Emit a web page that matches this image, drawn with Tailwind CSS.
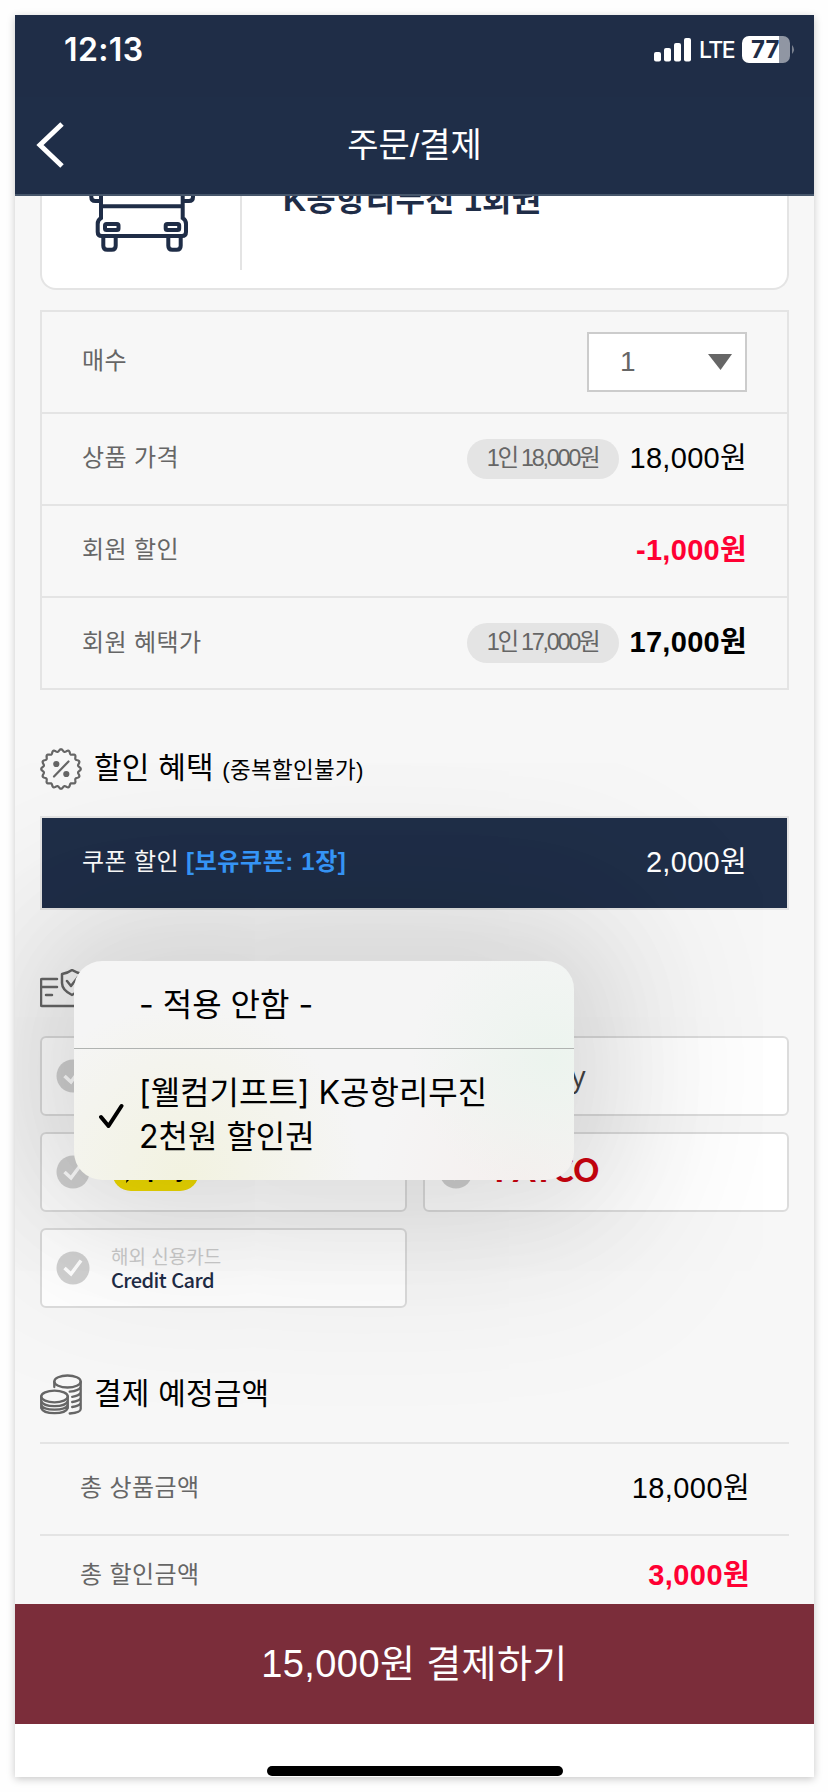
<!DOCTYPE html>
<html lang="ko">
<head>
<meta charset="utf-8">
<title>주문/결제</title>
<script src="https://cdn.jsdelivr.net/npm/@tailwindcss/browser@4"></script>
</head>
<body class="h-[1792px] w-[828px] overflow-hidden bg-[#fefefe] p-[15px] font-['Liberation_Sans','Noto_Sans_CJK_KR',sans-serif] text-black">
<main class="flex h-[1762px] w-[799px] flex-col overflow-hidden bg-white shadow-[0_2px_8px_rgba(0,0,0,0.22)]">
  <header class="relative z-20 flex h-[181px] shrink-0 flex-col border-b-2 border-[#46566b] bg-[#1f2d47] text-white">
    <div class="flex h-[82px] items-start justify-between pt-[15px] pr-[18px] pl-[49px]">
      <div class="font-['Inter',sans-serif] text-[32px] leading-[40px] font-semibold tracking-[0.4px]">12:13</div>
      <div class="flex h-[39px] items-center">
        <svg class="mr-[8px] h-[24px] w-[37px]" viewBox="0 0 37 24" fill="#fff"><rect x="0" y="14" width="7" height="9.500" rx="2"/><rect x="10" y="10" width="7" height="13.500" rx="2"/><rect x="20" y="5" width="7" height="18.500" rx="2"/><rect x="30" y="0" width="7" height="23.500" rx="2"/></svg>
        <span class="mr-[9px] w-[34px] pt-[2px] font-['Inter',sans-serif] text-[23px] font-medium tracking-[-1.500px]">LTE</span>
        <svg class="h-[27px] w-[54px]" viewBox="0 0 54 27"><path d="M37 0h4a7 7 0 0 1 7 7v13a7 7 0 0 1-7 7h-4z" fill="#9096a3"/><path d="M7 0h30v27H7a7 7 0 0 1-7-7V7a7 7 0 0 1 7-7z" fill="#fff"/><path d="M50 9q4 4.500 0 9z" fill="#7b8290"/><text x="9" y="22" font-family="Inter" font-size="24" font-weight="700" fill="#1f2d47">77</text></svg>
      </div>
    </div>
    <div class="grid h-[97px] grid-cols-[1fr_auto_1fr] items-center bg-[#1f2e48] pb-[1px]">
      <svg class="ml-[21px] h-[46px] w-[32px]" viewBox="0 0 32 46" fill="none" stroke="#fff" stroke-width="5"><path d="M26 2 4 23l22 21"/></svg>
      <h1 class="text-[34px] leading-[40px]">주문/결제</h1>
      <span></span>
    </div>
  </header>
  <section class="relative z-0 h-[1408px] shrink-0 overflow-hidden bg-[#f7f7f7] px-[25px]">
    <div class="flex h-[94px] rounded-b-[16px] border-2 border-t-0 border-[#e4e4e4] bg-white">
      <div class="h-[74px] w-[200px] border-r-2 border-[#e4e4e4]">
        <svg class="ml-[46px] h-[60px] w-[108px]" viewBox="0 0 108 60" fill="none" stroke="#1f2d47" stroke-width="4"><path d="M13 0v22q-3.300 2-3.300 6v8q0 4 4 4h80.300q4 0 4-4v-8q0-4-3.300-6V0M13 10.300h81.700M13 5H7.300q-4 0-4-4V0M94.700 5h6.300q4 0 4-4V0"/><rect x="17" y="28" width="13.500" height="6" rx="1.500"/><rect x="77.700" y="28" width="13.500" height="6" rx="1.500"/><path d="M15.300 40v9.700q0 4 4 4h4.400q4 0 4-4V40M80.300 40v9.700q0 4 4 4h4.400q4 0 4-4V40"/></svg>
      </div>
      <div class="pl-[41px] text-[32px] leading-[9px] font-bold tracking-[0.25px] text-[#1f2d47]">K공항리무진 1회권</div>
    </div>
    <div class="mt-[20px] h-[380px] border-2 border-[#e4e4e4] text-[24px] tracking-[0.400px] text-[#666]">
      <div class="flex h-[102px] items-center justify-between border-b-2 border-[#e4e4e4] px-[40px]">
        <span class="-mt-[2px]">매수</span>
        <div class="flex h-[60px] w-[160px] items-center justify-between border-2 border-[#ccc] bg-white pr-[13px] pl-[31px] text-[28px]"><span>1</span><svg class="h-[16px] w-[24px]" viewBox="0 0 24 16"><path d="M0 0h24L12.500 16z" fill="#666"/></svg></div>
      </div>
      <div class="flex h-[92px] items-center border-b-2 border-[#e4e4e4] px-[40px]">
        <span class="mr-auto -mt-[2px]">상품 가격</span>
        <span class="mr-[11px] flex h-[40px] w-[152px] items-center justify-center rounded-full bg-[#e4e4e4] text-[23.500px] tracking-[-2.300px]">1인 18,000원</span>
        <span class="-mt-[1px] text-[29px] tracking-[0.300px] text-black">18,000원</span>
      </div>
      <div class="flex h-[92px] items-center border-b-2 border-[#e4e4e4] px-[40px]">
        <span class="mr-auto -mt-[2px]">회원 할인</span>
        <span class="-mt-[1px] text-[29px] font-bold tracking-[0.300px] text-[#ff0033]">-1,000원</span>
      </div>
      <div class="flex h-[90px] items-center px-[40px]">
        <span class="mr-auto">회원 혜택가</span>
        <span class="mr-[11px] flex h-[40px] w-[152px] items-center justify-center rounded-full bg-[#e4e4e4] text-[23.500px] tracking-[-2.300px]">1인 17,000원</span>
        <span class="-mt-[1px] text-[29px] font-bold tracking-[0.300px] text-black">17,000원</span>
      </div>
    </div>
    <h2 class="mt-[52px] flex h-[54px] items-center text-[30px] leading-[40px]">
      <svg class="mr-[12px] h-[42px] w-[42px]" viewBox="0 0 42 42" fill="none" stroke="#666" stroke-width="2.200" stroke-linejoin="round" stroke-linecap="round"><path id="seal"/><path d="M14 28.500 28.500 13.500"/><circle cx="16.300" cy="16" r="2" fill="#666"/><circle cx="26.300" cy="26" r="2" fill="#666"/></svg>
      <span class="tracking-[0.200px]">할인 혜택 <span class="text-[22.500px] tracking-[0.300px]">(중복할인불가)</span></span>
    </h2>
    <div class="mt-[20px] flex h-[94px] items-center justify-between border-2 border-[#e4e4e4] bg-[#1f2e48] px-[40px] text-[24px] tracking-[0.400px] text-white">
      <span class="-mt-[2px]">쿠폰 할인 <b class="tracking-[0.600px] text-[#389bff]">[보유쿠폰: 1장]</b></span>
      <span class="-mt-[1px] text-[29px] tracking-[0.300px]">2,000원</span>
    </div>
    <svg class="mt-[59px] h-[42px] w-[46px]" viewBox="0 0 46 42" fill="none" stroke="#666" stroke-width="2.500" stroke-linecap="round" stroke-linejoin="round"><path d="M17 10H2q-1 0-1 1v25q0 1 1 1h40M2 18h15M6 26h6M32 1q5 3 10 4v9q0 7-10 12-10-5-10-12V5q6-1 10-4zM27 12l4 5 7-9"/></svg>
    <div class="mt-[25px] grid grid-cols-2 gap-4">
      <div class="flex h-[80px] items-center rounded-[6px] border-2 border-[#dcdcdc] bg-white px-[14px]"><svg class="h-[34px] w-[34px]" viewBox="0 0 34 34"><circle cx="17" cy="17" r="16.500" fill="#d2d2d2"/><path d="m8.500 17 6.500 6 10-13.500" fill="none" stroke="#fff" stroke-width="3.500"/></svg></div>
      <div class="flex h-[80px] items-center rounded-[6px] border-2 border-[#dcdcdc] bg-white px-[14px]"><svg class="mr-[22px] h-[34px] w-[34px]" viewBox="0 0 34 34"><circle cx="17" cy="17" r="16.500" fill="#d2d2d2"/><path d="m8.500 17 6.500 6 10-13.500" fill="none" stroke="#fff" stroke-width="3.500"/></svg><span class="w-[91px] text-right font-['Open_Sans',sans-serif] text-[29px] text-[#444]">pay</span></div>
      <div class="flex h-[80px] items-center rounded-[6px] border-2 border-[#dcdcdc] bg-white px-[14px]"><svg class="mr-[22px] h-[34px] w-[34px]" viewBox="0 0 34 34"><circle cx="17" cy="17" r="16.500" fill="#d2d2d2"/><path d="m8.500 17 6.500 6 10-13.500" fill="none" stroke="#fff" stroke-width="3.500"/></svg><span class="flex h-[38px] w-[87px] items-center justify-center gap-[7px] rounded-full bg-[#f3de00] pb-[7px] text-[24px] font-bold text-black"><svg class="mt-[10px] h-[20px] w-[18px]" viewBox="0 0 18 20"><path d="M9 0c12 0 12 14 0 14l-5 5 1-6C-3 10 0 0 9 0z"/></svg>pay</span></div>
      <div class="flex h-[80px] items-center rounded-[6px] border-2 border-[#dcdcdc] bg-white px-[14px]"><svg class="mr-[22px] h-[34px] w-[34px]" viewBox="0 0 34 34"><circle cx="17" cy="17" r="16.500" fill="#d2d2d2"/><path d="m8.500 17 6.500 6 10-13.500" fill="none" stroke="#fff" stroke-width="3.500"/></svg><span class="-mt-[4px] font-['Lato',sans-serif] text-[32px] leading-[34px] font-black text-[#d0040f]">PAYCO</span></div>
      <div class="flex h-[80px] items-center rounded-[6px] border-2 border-[#dcdcdc] bg-white px-[14px]"><svg class="mr-[21px] h-[34px] w-[34px]" viewBox="0 0 34 34"><circle cx="17" cy="17" r="16.500" fill="#d2d2d2"/><path d="m8.500 17 6.500 6 10-13.500" fill="none" stroke="#fff" stroke-width="3.500"/></svg><span class="flex flex-col font-['Noto_Sans_CJK_KR',sans-serif] text-[19px] leading-[24px] text-[#cdcdcd]">해외 신용카드<span class="text-[20px] font-medium tracking-[-0.550px] text-[#1f2d47]">Credit Card</span></span></div>
    </div>
    <h2 class="mt-[60px] flex h-[54px] items-center text-[30px] leading-[40px]">
      <svg class="mr-[12px] h-[42px] w-[42px]" viewBox="0 0 42 42" fill="none" stroke="#666" stroke-width="2.300" stroke-linecap="round"><ellipse cx="27.500" cy="7.500" rx="13.200" ry="6"/><path d="M14.300 8v5M40.700 8v27q0 3.500-11 4.500M40.700 13q-1.500 3.700-11 4.700M40.700 18.500q-1.500 3.500-8.500 4.300M40.700 24q-1.500 3-8.500 4M40.700 29q-1.500 3-8.500 4"/><ellipse cx="14.500" cy="22.500" rx="13.300" ry="5.800"/><path d="M1.200 22.500v11.500q2 5.200 13.300 5.200t13.300-5.200V22.500M1.200 27q2 5.200 13.300 5.200t13.300-5.200M1.200 31q2 4.700 13.300 4.700t13.300-4.700"/></svg>
      <span class="-mt-[3px] tracking-[0.200px]">결제 예정금액</span>
    </h2>
    <div class="mt-[20px] border-t-2 border-[#e4e4e4] text-[24px] tracking-[0.400px] text-[#666]">
      <div class="flex h-[92px] items-center justify-between border-b-2 border-[#e4e4e4] pr-[39px] pl-[40px]"><span class="-mt-[2px]">총 상품금액</span><span class="-mt-[1px] text-[29px] tracking-[0.400px] text-black">18,000원</span></div>
      <div class="flex h-[80px] items-center justify-between pr-[39px] pl-[40px]"><span class="-mt-[2px]">총 할인금액</span><span class="-mt-[1px] text-[29px] font-bold tracking-[0.400px] text-[#ff0033]">3,000원</span></div>
    </div>
    <div class="absolute top-[765px] left-[59px] flex h-[219px] w-[500px] flex-col overflow-hidden rounded-[28px] bg-[#f5f5f5] bg-[radial-gradient(circle_at_95%_45%,#ecf4ee_0%,transparent_28%),radial-gradient(circle_at_22%_100%,#f2f2e0_0%,transparent_40%),radial-gradient(circle_at_90%_100%,#f5efee_0%,transparent_30%)] font-['Inter','Noto_Sans_CJK_KR',sans-serif] text-[32px] leading-[44px] shadow-[0_0_120px_30px_rgba(10,10,0,0.08),0_0_190px_70px_rgba(10,10,0,0.09)]">
      <div class="flex h-[88px] items-center border-b border-[#b0b3b1] pl-[65px]">- 적용 안함 -</div>
      <div class="flex flex-1 items-center pl-[25px]">
        <svg class="mt-[2px] mr-[15px] h-[26px] w-[25px]" viewBox="0 0 25 26" fill="none" stroke="#000" stroke-width="4" stroke-linecap="round" stroke-linejoin="round"><path d="m2 14 7.500 9L22.500 3"/></svg>
        <p>[웰컴기프트] K공항리무진<br>2천원 할인권</p>
      </div>
    </div>
  </section>
  <button class="h-[120px] shrink-0 bg-[#7b2d3a] text-[38px] leading-[48px] tracking-[0.400px] text-white">15,000원 결제하기</button>
  <div class="flex flex-1 items-end justify-center pb-[1px]"><span class="h-[10px] w-[296px] rounded-full bg-black"></span></div>
</main>
<script>
let points = [];
for (let i = 0; i <= 180; i++) { const a = i * Math.PI / 90, r = 18.600 + 1.200 * Math.cos(16 * a); points.push((21 + r * Math.sin(a)).toFixed(2) + ' ' + (21 - r * Math.cos(a)).toFixed(2)); }
document.getElementById('seal').setAttribute('d', 'M' + points.join('L') + 'z');
</script>
</body>
</html>
